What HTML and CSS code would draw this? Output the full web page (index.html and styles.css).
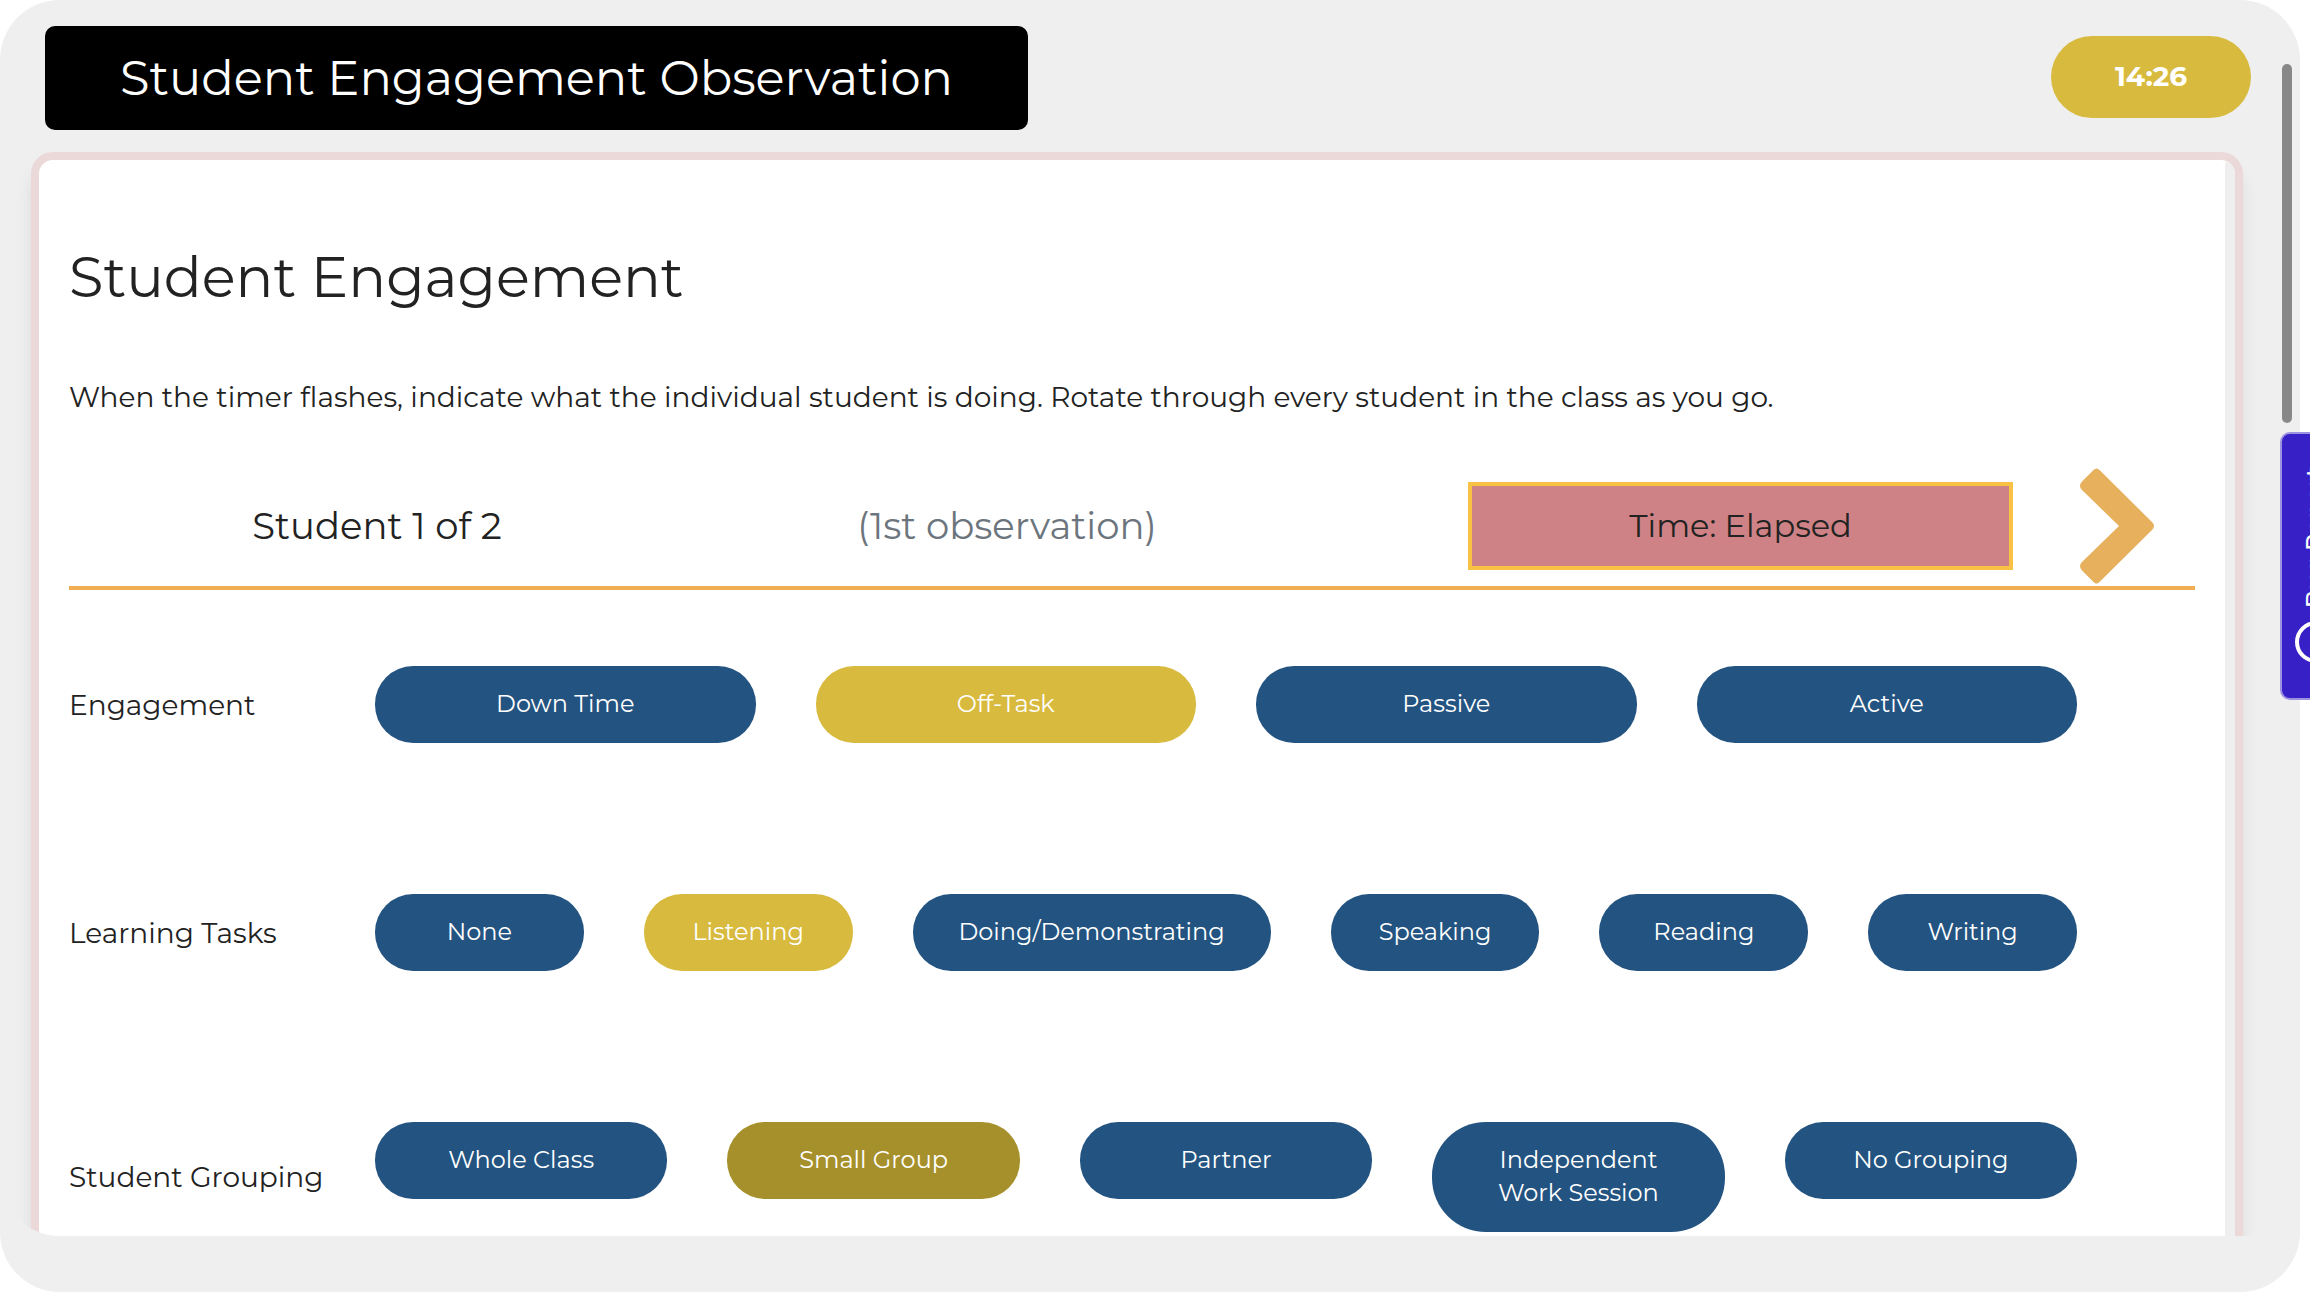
FILE: index.html
```html
<!DOCTYPE html>
<html lang="en">
<head>
<meta charset="utf-8">
<title>Student Engagement Observation</title>
<link rel="stylesheet" href="styles.css">
</head>
<body>
<div class="shell">
  <div class="scroller">
    <header class="topbar">
      <h1 class="page-title">Student Engagement Observation</h1>
      <button class="timer" type="button">14:26</button>
    </header>
    <main class="card">
      <div class="card-body">
        <h2 class="section-title">Student Engagement</h2>
        <p class="intro">When the timer flashes, indicate what the individual student is doing. Rotate through every student in the class as you go.</p>
        <div class="status">
          <div class="student">Student 1 of 2</div>
          <div class="observation">(1st observation)</div>
          <div class="elapsed">Time: Elapsed</div>
          <button class="next" type="button" aria-label="Next student">
            <svg width="74" height="116" viewBox="0 0 74 116" aria-hidden="true"><path d="M13.500 2Q16.500-1 19.500 2L72 54Q76 58 72 62L19.500 114Q16.500 117 13.500 114L2 102.500Q-2 98 2 94L39 58 2 22Q-2 18 2 13.500Z" fill="#e6b05d"/></svg>
          </button>
        </div>
        <section class="group">
          <h3 class="group-label">Engagement</h3>
          <div class="options">
            <button class="pill" type="button">Down Time</button>
            <button class="pill selected" type="button">Off-Task</button>
            <button class="pill" type="button">Passive</button>
            <button class="pill" type="button">Active</button>
          </div>
        </section>
        <section class="group">
          <h3 class="group-label">Learning Tasks</h3>
          <div class="options">
            <button class="pill" type="button">None</button>
            <button class="pill selected" type="button">Listening</button>
            <button class="pill" type="button">Doing/Demonstrating</button>
            <button class="pill" type="button">Speaking</button>
            <button class="pill" type="button">Reading</button>
            <button class="pill" type="button">Writing</button>
          </div>
        </section>
        <section class="group">
          <h3 class="group-label">Student Grouping</h3>
          <div class="options">
            <button class="pill" type="button">Whole Class</button>
            <button class="pill selected pressed" type="button">Small Group</button>
            <button class="pill" type="button">Partner</button>
            <button class="pill" type="button">Independent<br>Work Session</button>
            <button class="pill" type="button">No Grouping</button>
          </div>
        </section>
      </div>
      <div class="card-track"></div>
    </main>
  </div>
  <div class="scroll-thumb"></div>
</div>
<button class="report-tab" type="button">
  <span class="report-text">Bug Report</span>
  <svg class="report-icon" width="44" height="44" viewBox="0 0 44 44" aria-hidden="true"><circle cx="22" cy="22" r="19" fill="none" stroke="#fff" stroke-width="4"/></svg>
</button>
</body>
</html>
```
FILE: styles.css
```css
* {
  box-sizing: border-box;
}

body {
  margin: 0;
  height: 100vh;
  overflow: hidden;
  background: #fff;
  color: #222;
  font-family: Montserrat, Inter, "Open Sans", sans-serif;
}

h1, h2, h3, p {
  margin: 0;
  font-weight: 400;
}

button {
  margin: 0;
  border: 0;
  font-family: inherit;
  cursor: pointer;
}

.shell {
  position: relative;
  display: flex;
  flex-direction: column;
  height: calc(100vh - 2px);
  margin-right: 10px;
  padding-bottom: 56px;
  border-radius: 60px;
  background: #efefef;
}

.scroller {
  flex: 1;
  min-height: 0;
  padding: 26px 57px 0 31px;
  border-radius: 60px;
  overflow: hidden;
}

.topbar {
  display: flex;
  align-items: center;
  justify-content: space-between;
  margin: 0 -8px 22px 14px;
}

.page-title {
  padding: 22px 75px;
  border-radius: 10px;
  background: #000;
  color: #fff;
  font-size: 48px;
  line-height: 60px;
}

.timer {
  width: 200px;
  height: 82px;
  margin-bottom: 2px;
  padding: 0 0 2px;
  border-radius: 41px;
  background: #d8ba3e;
  color: #fff;
  font-size: 28px;
  font-weight: 700;
}

.card {
  display: flex;
  border: 8px solid #ebd8d9;
  border-radius: 22px;
  background: #fff;
  box-shadow: 0 16px 16px rgba(0, 0, 0, 0.08);
  overflow: hidden;
}

.card-body {
  flex: 1;
  padding: 83px 30px 152px;
}

.card-track {
  width: 10px;
  border-radius: 8px 8px 0 0;
  background: #efefef;
}

.section-title {
  font-size: 56px;
  line-height: 68px;
}

.intro {
  margin-top: 65px;
  font-size: 28px;
  line-height: 42px;
}

.status {
  display: grid;
  grid-template-columns: 616fr 644fr 684fr 182fr;
  align-items: center;
  height: 128px;
  margin-top: 44px;
  padding-top: 4px;
  border-bottom: 4px solid #f0ae50;
}

.student,
.observation {
  font-size: 37px;
  line-height: 48px;
  text-align: center;
}

.observation {
  color: #6c757d;
}

.elapsed {
  margin-left: 139px;
  padding: 16px;
  border: 4px solid #f8c344;
  background: #cf8285;
  color: #222;
  font-size: 32px;
  line-height: 48px;
  text-align: center;
}

.next {
  display: flex;
  padding: 0 0 0 67px;
  background: none;
}

.group {
  display: grid;
  grid-template-columns: 306px 1fr;
  align-items: center;
  margin: 76px 118px 0 0;
}

.group + .group {
  margin-top: 151px;
}

.group-label {
  font-size: 28px;
  line-height: 42px;
}

.options {
  display: flex;
  align-items: flex-start;
  gap: 60px;
}

.pill {
  flex: 1 0 0;
  padding: 21px 46px 23px;
  border-radius: 38px;
  background: #235380;
  color: #fff;
  font-size: 24px;
  line-height: 33px;
  white-space: nowrap;
}

.pill:has(br) {
  border-radius: 54px;
}

.pill.selected {
  background: #d8ba3e;
}

.pill.pressed {
  background: #a6902b;
}

.scroll-thumb {
  position: absolute;
  top: 64px;
  right: 8px;
  width: 10px;
  height: 359px;
  border-radius: 5px;
  background: #888;
}

.report-tab {
  position: fixed;
  top: 432px;
  right: -42px;
  display: flex;
  flex-direction: column;
  align-items: flex-start;
  justify-content: flex-end;
  gap: 12px;
  width: 72px;
  height: 268px;
  padding: 0 0 34px 12px;
  border: 2px solid #9d91e2;
  border-radius: 10px;
  background: #3721c6;
  color: #fff;
}

.report-text {
  writing-mode: vertical-rl;
  transform: rotate(180deg);
  font-size: 24px;
  font-weight: 500;
  line-height: 42px;
}
```
